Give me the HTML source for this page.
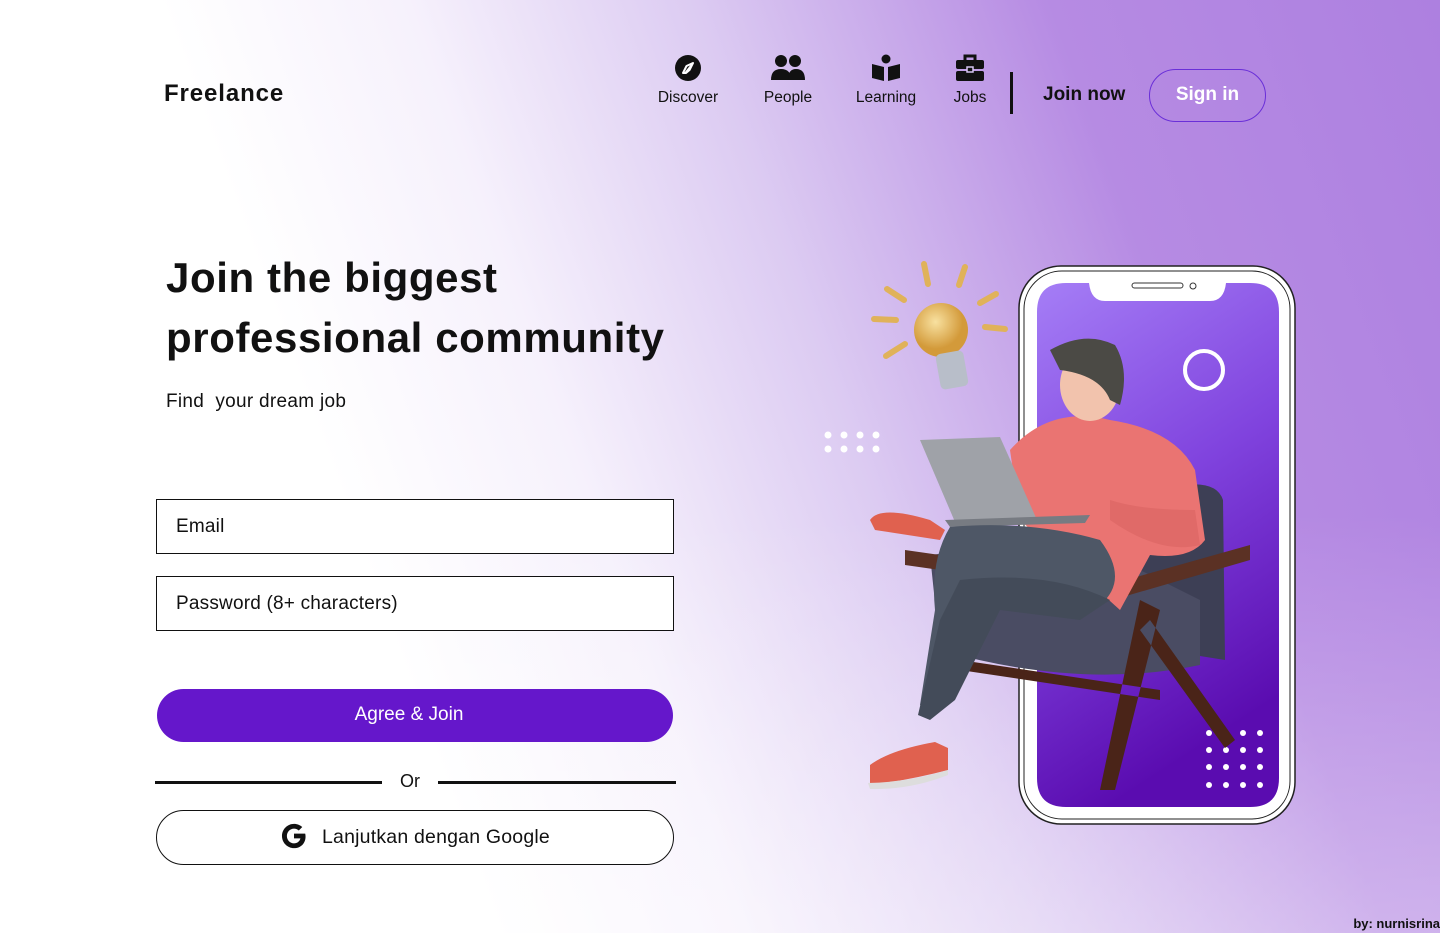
<!DOCTYPE html>
<html><head><meta charset="utf-8"><style>
*{margin:0;padding:0;box-sizing:border-box}
html,body{width:1440px;height:933px;overflow:hidden}
body{font-family:"Liberation Sans",sans-serif;color:#111;position:relative;
background:linear-gradient(to bottom,rgba(255,255,255,0) 55%,rgba(255,255,255,0.35) 100%),linear-gradient(250deg,#ad80e0 0%,#b68be3 22%,#dccbf2 42%,#f6f1fc 58%,#fff 72%);}
.abs{position:absolute}
.logo{left:164px;top:80px;font-size:24px;font-weight:bold;letter-spacing:0.9px}
.nav{top:54px;text-align:center;font-size:15.5px}
.nav svg{display:block;margin:0 auto 7px}
.sep{left:1010px;top:72px;width:3px;height:42px;background:#111}
.join{left:1043px;top:84px;font-size:19px;font-weight:bold}
.sign{left:1149px;top:69px;width:117px;height:53px;border:1.5px solid #6a2fd8;border-radius:27px;color:#fff;font-size:19px;font-weight:bold;text-align:center;line-height:50px}
h1{position:absolute;left:166px;top:248px;font-size:42px;line-height:60px;font-weight:bold;letter-spacing:0.6px}
.sub{left:166px;top:391px;font-size:19px;letter-spacing:0.3px}
.inp{left:156px;width:518px;height:55px;border:1.3px solid #111;background:#fff;font-size:19px;padding-left:19px;line-height:53px;letter-spacing:0.2px}
.btn{left:157px;top:689px;width:516px;height:53px;border-radius:27px;background:#6517cb;color:#fff;font-size:19px;text-align:center;line-height:51px;padding-right:12px}
.line{top:781px;height:3px;background:#111}
.or{left:400px;top:771px;font-size:18px}
.g{left:156px;top:810px;width:518px;height:55px;border:1.3px solid #111;border-radius:28px;background:#fff;font-size:19.5px;line-height:53px;text-align:center;letter-spacing:0.2px}
.by{right:0;top:916px;font-size:13px;font-weight:bold}
</style></head><body>
<div class="abs logo">Freelance</div>

<div class="abs nav" style="left:648px;width:80px"><svg width="28" height="28" viewBox="0 0 28 28"><circle cx="14" cy="14" r="13" fill="#111"/><path d="M19 9 L15.5 16 L12 19 L9 19 L12.5 12 Z" fill="none" stroke="#fff" stroke-width="2" stroke-linejoin="round"/><path d="M19 9 L11 19" stroke="#fff" stroke-width="1.5"/></svg>Discover</div>
<div class="abs nav" style="left:756px;width:64px"><svg width="34" height="28" viewBox="0 0 34 28"><circle cx="10" cy="7" r="6" fill="#111"/><circle cx="24" cy="7" r="6" fill="#111"/><path d="M0 26 Q0 15 10 15 Q20 15 20 26Z" fill="#111"/><path d="M17 26 Q17 15 25 15 Q34 15 34 26Z" fill="#111"/></svg>People</div>
<div class="abs nav" style="left:848px;width:76px"><svg width="30" height="28" viewBox="0 0 30 28"><circle cx="15" cy="5" r="4.5" fill="#111"/><path d="M1 10 L13 13 L13 27 L1 24Z M29 10 L17 13 L17 27 L29 24Z" fill="#111"/></svg>Learning</div>
<div class="abs nav" style="left:948px;width:44px"><svg width="30" height="28" viewBox="0 0 30 28"><path d="M10 6 V2 H20 V6" fill="none" stroke="#111" stroke-width="3"/><rect x="1" y="6" width="28" height="9" rx="2" fill="#111"/><rect x="1" y="17" width="28" height="10" rx="2" fill="#111"/><rect x="12" y="13" width="6" height="5" fill="#111" stroke="#d6c6f1" stroke-width="1.5"/></svg>Jobs</div>
<div class="abs sep"></div>
<div class="abs join">Join now</div>
<div class="abs sign">Sign in</div>

<h1>Join the biggest<br>professional community</h1>
<div class="abs sub">Find&nbsp; your dream job</div>

<div class="abs inp" style="top:499px">Email</div>
<div class="abs inp" style="top:576px">Password (8+ characters)</div>
<div class="abs btn">Agree &amp; Join</div>
<div class="abs line" style="left:155px;width:227px"></div>
<div class="abs or">Or</div>
<div class="abs line" style="left:438px;width:238px"></div>
<div class="abs g"><svg width="28" height="28" viewBox="0 0 24 24" style="vertical-align:middle;margin-right:14px;margin-top:-4px"><path d="M21.6 10H12v4h5.5c-.6 2.6-2.8 4.3-5.5 4.3-3.4 0-6.1-2.8-6.1-6.3S8.6 5.7 12 5.7c1.6 0 3 .6 4.1 1.6l3-3C17.3 2.7 14.8 1.6 12 1.6 6.3 1.6 1.7 6.3 1.7 12S6.3 22.4 12 22.4c5.8 0 9.9-4.1 9.900-9.9 0-.9-.1-1.7-.3-2.5z" fill="#111"/></svg>Lanjutkan dengan Google</div>

<svg class="abs" style="left:800px;top:250px" width="520" height="600" viewBox="800 250 520 600">
<defs>
<linearGradient id="scr" x1="0" y1="0" x2="0.3" y2="1"><stop offset="0" stop-color="#a57ef6"/><stop offset="0.5" stop-color="#8043de"/><stop offset="1" stop-color="#5a0cb0"/></linearGradient>
<radialGradient id="bulb" cx="0.4" cy="0.35"><stop offset="0" stop-color="#f8e1a0"/><stop offset="1" stop-color="#d39a3a"/></radialGradient>
</defs>
<rect x="1019" y="266" width="276" height="558" rx="42" fill="#fff" stroke="#222" stroke-width="1.5"/>
<rect x="1024" y="271" width="266" height="548" rx="38" fill="none" stroke="#222" stroke-width="1"/>
<path d="M1075 283 H1089 Q1091 301 1105 301 H1210 Q1224 301 1226 283 H1250 Q1279 283 1279 312 V778 Q1279 807 1250 807 H1066 Q1037 807 1037 778 V312 Q1037 283 1066 283Z" fill="url(#scr)"/>
<rect x="1132" y="283" width="51" height="5" rx="2.5" fill="none" stroke="#333"/>
<circle cx="1193" cy="286" r="3" fill="none" stroke="#333"/>
<circle cx="1204" cy="370" r="19" fill="none" stroke="#fff" stroke-width="4"/>
<g fill="#fff">
<g id="r"><circle cx="1209" cy="733" r="3"/><circle cx="1226" cy="733" r="3"/><circle cx="1243" cy="733" r="3"/><circle cx="1260" cy="733" r="3"/></g>
<use href="#r" y="17"/><use href="#r" y="34"/><use href="#r" y="52"/>
<circle cx="828" cy="435" r="3.5"/><circle cx="844" cy="435" r="3.5"/><circle cx="860" cy="435" r="3.5"/><circle cx="876" cy="435" r="3.5"/>
<circle cx="828" cy="449" r="3.5"/><circle cx="844" cy="449" r="3.5"/><circle cx="860" cy="449" r="3.5"/><circle cx="876" cy="449" r="3.5"/>
</g>
<g stroke="#e0b25a" stroke-width="6" stroke-linecap="round">
<line x1="924" y1="264" x2="928" y2="284"/><line x1="965" y1="267" x2="959" y2="285"/>
<line x1="887" y1="289" x2="904" y2="300"/><line x1="980" y1="303" x2="996" y2="294"/>
<line x1="874" y1="319" x2="896" y2="320"/><line x1="985" y1="327" x2="1005" y2="329"/>
<line x1="886" y1="356" x2="905" y2="344"/>
</g>
<circle cx="941" cy="330" r="27" fill="url(#bulb)"/>
<rect x="938" y="352" width="28" height="36" rx="5" fill="#b8bec9" transform="rotate(-10 952 370)"/>
<path d="M1160 490 Q1215 475 1223 500 L1225 660 L1100 640Z" fill="#3d3f55"/>
<path d="M930 555 Q1000 545 1120 560 L1200 600 L1200 665 Q1080 690 940 650Z" fill="#4a4c63"/>
<path d="M905 550 L940 555 L940 570 L905 565Z M1090 590 L1250 545 L1250 560 L1095 605Z" fill="#5b3124"/>
<path d="M1140 600 L1100 790 L1115 790 L1160 610Z M1150 620 L1235 740 L1225 748 L1140 630Z M960 660 L1160 690 L1160 700 L960 670Z" fill="#4a2418"/>
<path d="M1010 450 Q1050 405 1110 420 Q1175 430 1195 470 L1205 540 Q1190 560 1150 555 L1120 610 L1020 520Z" fill="#ea7472"/>
<path d="M1110 500 Q1140 510 1195 510 L1200 545 Q1160 555 1110 520Z" fill="#e06a68"/>
<ellipse cx="1090" cy="385" rx="30" ry="36" fill="#f2c3ad"/>
<path d="M1050 350 Q1085 330 1115 345 Q1130 370 1120 405 L1110 400 Q1100 375 1060 370Z" fill="#4b4a45"/>
<path d="M920 440 L1000 437 L1037 520 L955 522Z" fill="#9fa2a8"/>
<path d="M945 520 L1090 515 L1085 523 L950 527Z" fill="#777b82"/>
<path d="M950 527 Q1030 520 1100 540 Q1130 580 1100 605 L1000 590 L970 640 L935 710 L920 705 L935 610 Q930 560 950 527Z" fill="#4e5766"/>
<path d="M960 580 Q1050 570 1110 600 L1080 620 L1000 610 L955 700 L930 720 L918 715 L940 620Z" fill="#434b59"/>
<path d="M870 520 Q880 505 930 520 L945 530 L940 540 L875 530Z" fill="#e0614f"/>
<path d="M870 765 Q890 750 935 742 L948 748 L948 770 Q910 780 870 785Z" fill="#e0614f"/>
<path d="M868 783 Q910 782 948 770 L948 775 Q910 790 870 789Z" fill="#ddd"/>
</svg>

<div class="abs by">by: nurnisrina</div>
</body></html>
